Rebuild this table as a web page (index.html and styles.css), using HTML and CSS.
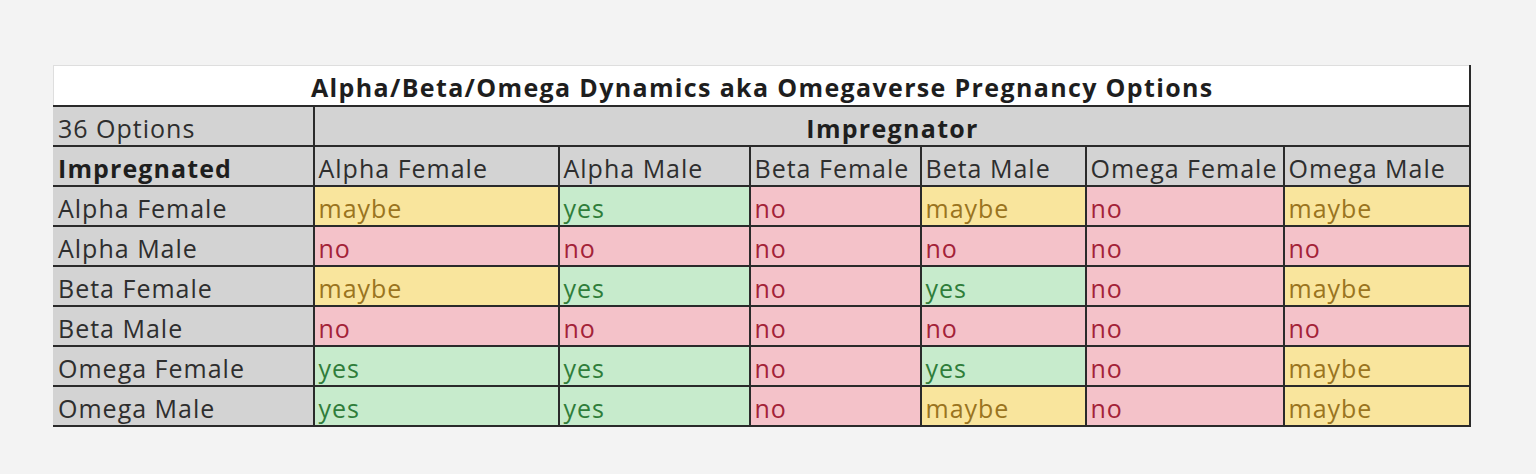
FILE: index.html
```html
<!DOCTYPE html>
<html lang="en">
<head>
<meta charset="utf-8">
<title>Omegaverse Pregnancy Options</title>
<link rel="stylesheet" href="styles.css">
</head>
<body>
<div class="page">
<table class="sheet">
<colgroup>
<col class="c1"><col class="c2"><col class="c3"><col class="c4"><col class="c5"><col class="c6"><col class="c7">
</colgroup>
<tr class="title-row"><th colspan="7" class="title">Alpha/Beta/Omega Dynamics aka Omegaverse Pregnancy Options</th></tr>
<tr class="hdr"><td class="lbl">36 Options</td><th colspan="6" class="imp">Impregnator</th></tr>
<tr class="hdr"><th class="lbl bold">Impregnated</th><td>Alpha Female</td><td>Alpha Male</td><td>Beta Female</td><td>Beta Male</td><td>Omega Female</td><td>Omega Male</td></tr>
<tr><td class="lbl">Alpha Female</td><td class="m">maybe</td><td class="y">yes</td><td class="n">no</td><td class="m">maybe</td><td class="n">no</td><td class="m">maybe</td></tr>
<tr><td class="lbl">Alpha Male</td><td class="n">no</td><td class="n">no</td><td class="n">no</td><td class="n">no</td><td class="n">no</td><td class="n">no</td></tr>
<tr><td class="lbl">Beta Female</td><td class="m">maybe</td><td class="y">yes</td><td class="n">no</td><td class="y">yes</td><td class="n">no</td><td class="m">maybe</td></tr>
<tr><td class="lbl">Beta Male</td><td class="n">no</td><td class="n">no</td><td class="n">no</td><td class="n">no</td><td class="n">no</td><td class="n">no</td></tr>
<tr><td class="lbl">Omega Female</td><td class="y">yes</td><td class="y">yes</td><td class="n">no</td><td class="y">yes</td><td class="n">no</td><td class="m">maybe</td></tr>
<tr><td class="lbl">Omega Male</td><td class="y">yes</td><td class="y">yes</td><td class="n">no</td><td class="m">maybe</td><td class="n">no</td><td class="m">maybe</td></tr>
</table>
</div>
</body>
</html>
```
FILE: styles.css
```css
html, body {
  margin: 0;
  padding: 0;
  background: #f3f3f3;
}
.page {
  padding: 65px 0 0 53px;
}
.sheet {
  border-collapse: collapse;
  table-layout: fixed;
  width: 1416px;
  font-family: "Open Sans", "Liberation Sans", sans-serif;
  font-size: 25px;
  letter-spacing: 1px;
  color: #2e2e2e;
}
.c1 { width: 260px; }
.c2 { width: 245px; }
.c3 { width: 191px; }
.c4 { width: 171px; }
.c5 { width: 165px; }
.c6 { width: 198px; }
.c7 { width: 186px; }
.sheet tr { height: 40px; }
.sheet td, .sheet th {
  border: 2px solid #2a2a2a;
  padding: 0 2px 2px 4px;
  text-align: left;
  font-weight: normal;
  white-space: nowrap;
  overflow: hidden;
  line-height: 30px;
  height: 34px;
  box-sizing: border-box;
  vertical-align: bottom;
}
.sheet .title {
  background: #ffffff;
  border-top: 1px solid #dedede;
  border-left: 1px solid #dedede;
  text-align: center;
  font-weight: bold;
  letter-spacing: 1.35px;
  color: #1e1e1e;
  padding-bottom: 3px;
}
.hdr td, .hdr th, .lbl {
  background: #d3d3d3;
}
.sheet .lbl {
  border-left: 1px solid #d3d3d3;
}
.sheet .imp {
  text-align: center;
  font-weight: bold;
  letter-spacing: 1.3px;
  color: #1e1e1e;
}
.sheet .bold {
  font-weight: bold;
  letter-spacing: 1.1px;
  color: #1e1e1e;
}
.m { background: #f9e59d; color: #9a7420; }
.y { background: #c7ebcc; color: #2f7d3a; }
.n { background: #f4c2c9; color: #a32238; }
```
